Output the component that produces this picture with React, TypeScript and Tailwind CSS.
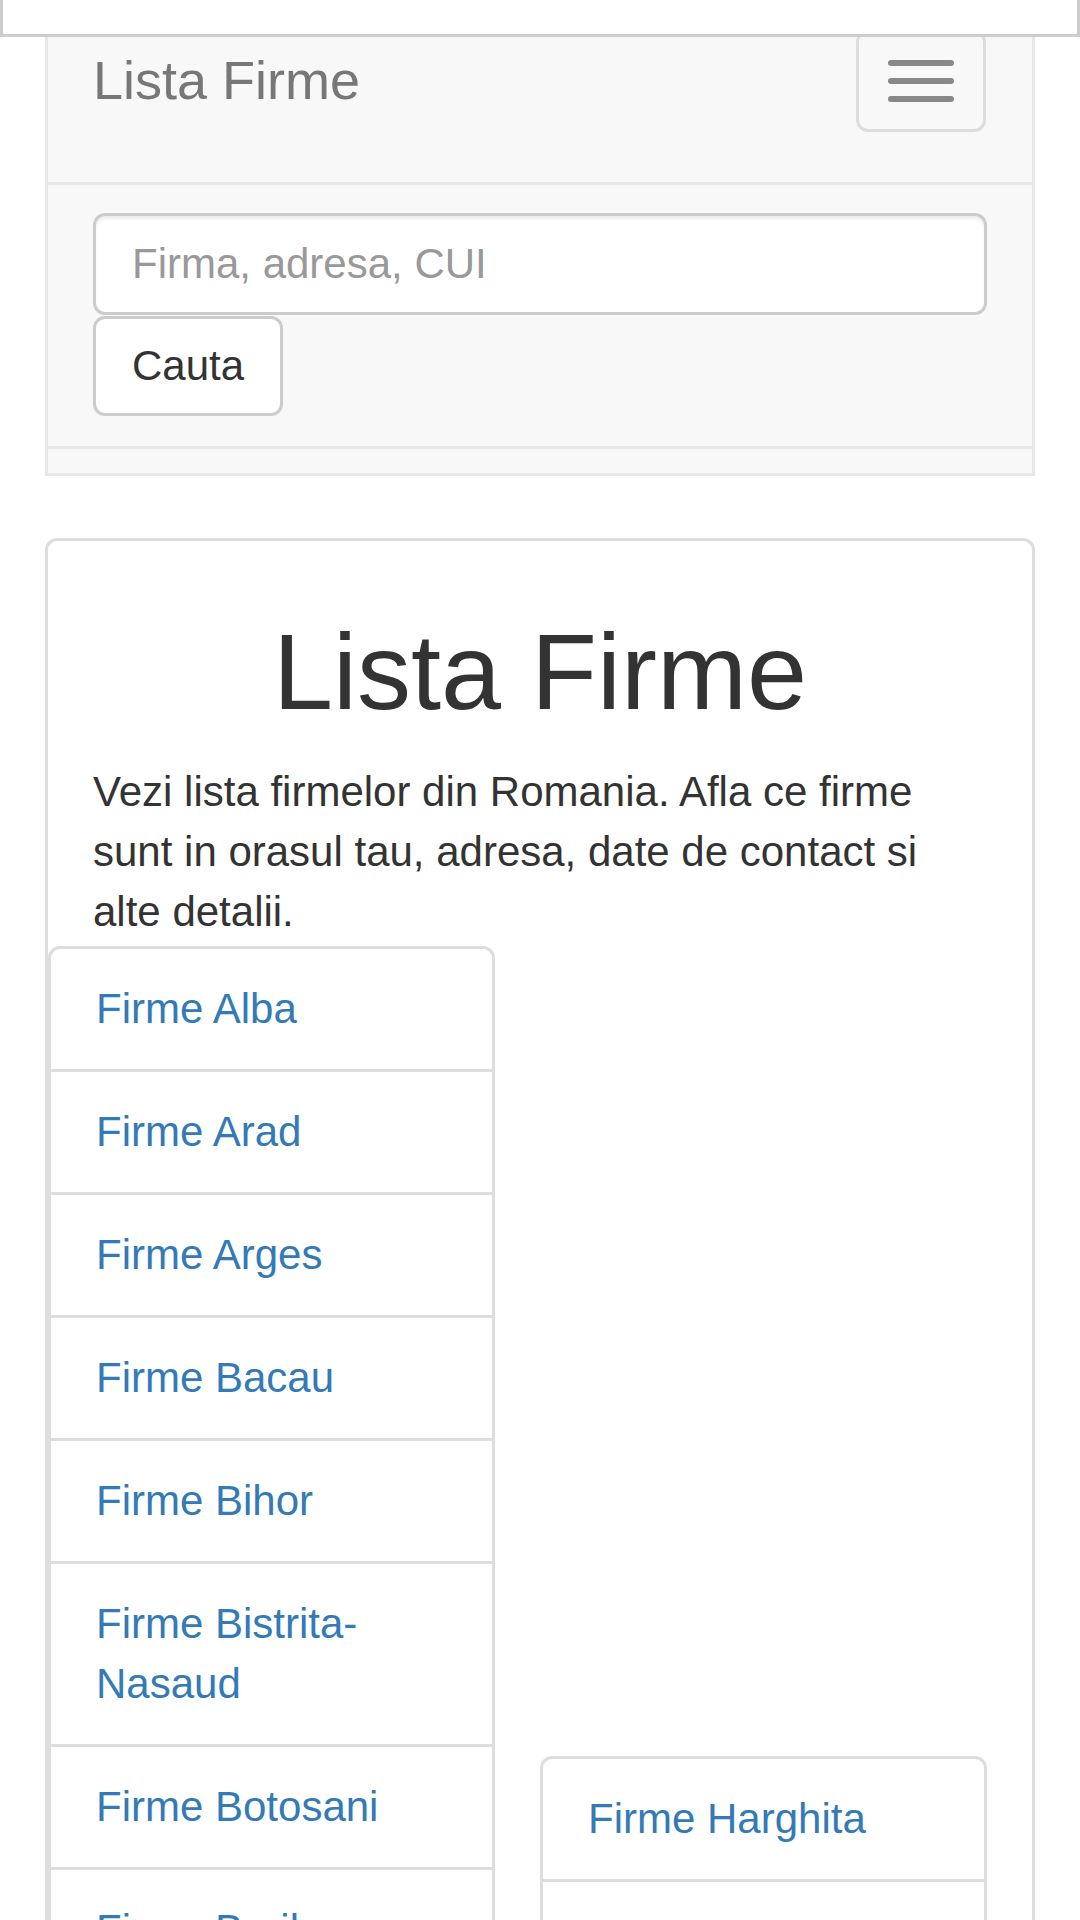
import React from 'react';

// only the counties that reach into the 1920px-high view
const leftCounties = ['Alba', 'Arad', 'Arges', 'Bacau', 'Bihor', 'Bistrita-Nasaud', 'Botosani', 'Braila'];

const rightCounties = ['Harghita', 'Hunedoara'];

const CountyList: React.FC<{ items: string[] }> = ({ items }) => (
  <ul>
    {items.map((name, i) => (
      <li
        key={name}
        className={`-mb-[3px] border-[3px] border-[#ddd] bg-white px-[45px] py-[30px] text-[42px] leading-[60px] ${
          i === 0 ? 'rounded-t-[12px]' : ''
        }`}
      >
        <a href="#" className="text-[#337ab7]">
          Firme {name}
        </a>
      </li>
    ))}
  </ul>
);

export default function App() {
  return (
    <div
      className="relative h-[1920px] overflow-hidden bg-white text-[#333]"
      style={{ fontFamily: '"Liberation Sans", Arial, sans-serif' }}
    >
      {/* fixed bar over the top of the page */}
      <div className="absolute left-0 top-0 z-10 h-[37px] w-full border-x-[3px] border-b-[3px] border-[#ccc] bg-white" />

      <nav className="mx-[45px] border-[3px] border-[#e7e7e7] bg-[#f8f8f8]">
        <div className="flex h-[179px] items-start justify-between">
          <a href="#" className="pl-[45px] pt-[47px] text-[54px] leading-[60px] text-[#777]">
            Lista Firme
          </a>
          <button className="mr-[46px] mt-[27px] flex h-[102px] w-[130px] flex-col items-center justify-center gap-[12px] rounded-[12px] border-[3px] border-[#ddd]">
            <span className="block h-[6px] w-[66px] rounded-[3px] bg-[#888]" />
            <span className="block h-[6px] w-[66px] rounded-[3px] bg-[#888]" />
            <span className="block h-[6px] w-[66px] rounded-[3px] bg-[#888]" />
          </button>
        </div>
        <form className="border-y-[3px] border-[#e7e7e7] px-[45px] pb-[30px] pt-[28px]">
          <input
            type="text"
            placeholder="Firma, adresa, CUI"
            className="block h-[102px] w-full rounded-[12px] border-[3px] border-[#ccc] bg-white px-[36px] text-[42px] shadow-[inset_0_3px_3px_rgba(0,0,0,0.075)] outline-none placeholder:text-[#999]"
          />
          <button
            type="button"
            className="mt-[1px] h-[100px] rounded-[12px] border-[3px] border-[#ccc] bg-white px-[36px] text-[42px] leading-[60px] text-[#333]"
          >
            Cauta
          </button>
        </form>
        <div className="h-[24px]" />
      </nav>

      <div className="mx-[45px] mt-[62px] rounded-[12px] border-[3px] border-[#ddd] bg-white">
        <div className="px-[45px] pt-[72px]">
          <h1 className="mb-[30px] text-center text-[108px] font-normal leading-[1.1]">Lista Firme</h1>
          <p className="mb-[4px] text-[42px] leading-[60px]">
            Vezi lista firmelor din Romania. Afla ce firme sunt in orasul tau, adresa, date de contact si alte detalii.
          </p>
          <div className="-mx-[45px] grid grid-cols-2">
            <div className="pr-[45px]">
              <CountyList items={leftCounties} />
            </div>
            <div className="pr-[45px] pt-[810px]">
              <CountyList items={rightCounties} />
            </div>
          </div>
        </div>
      </div>
    </div>
  );
}
